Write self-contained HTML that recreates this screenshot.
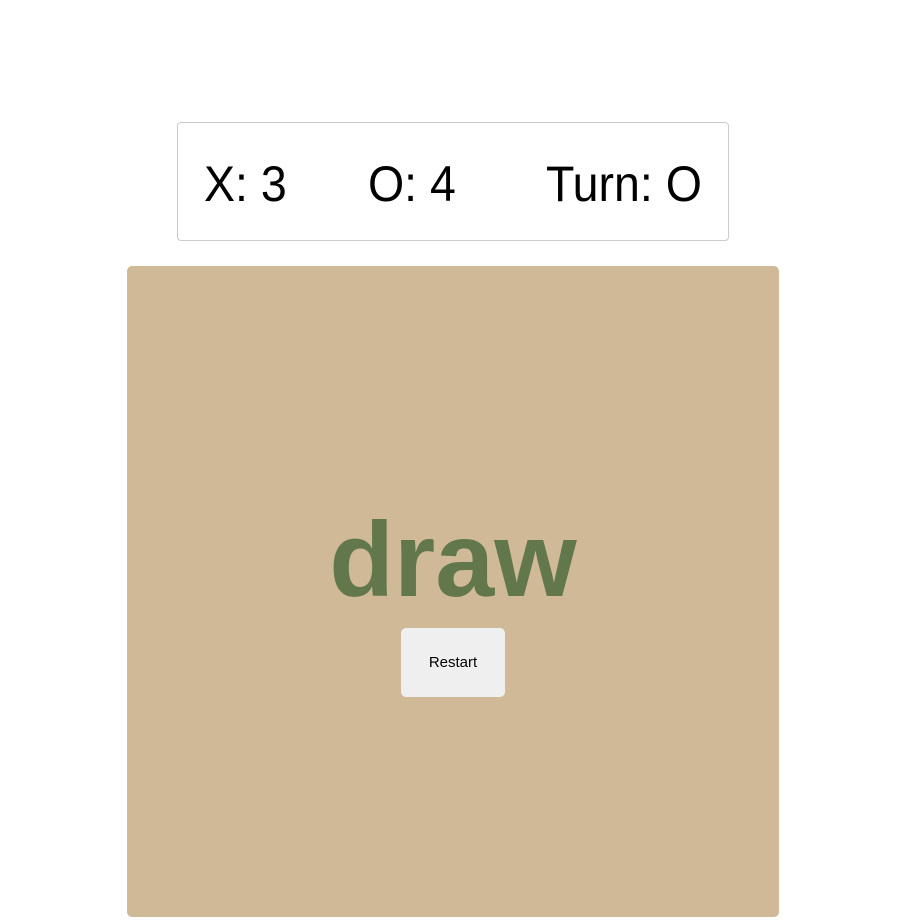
<!DOCTYPE html>
<html><head><style>
body{margin:0;width:902px;height:921px;background:#fff;position:relative;overflow:hidden;font-family:"Liberation Sans",sans-serif}
.score{position:absolute;left:177px;top:122px;width:550px;height:117px;border:1px solid #ccc;border-radius:4px;box-sizing:content-box}
.s{position:absolute;top:36px;font-size:50px;line-height:50px;color:#000;white-space:nowrap;transform:scaleX(0.93);transform-origin:left center}
.board{position:absolute;left:127px;top:266px;width:652px;height:651px;background:#d0b996;border-radius:5px}
.draw{position:absolute;left:0;width:652px;text-align:center;top:241px;font-size:106px;line-height:106px;font-weight:bold;color:#62774c}
.btn{position:absolute;left:274px;top:362px;width:104px;height:69px;background:#efefef;border-radius:5px;font-size:15px;text-align:center;line-height:69px;color:#000}
</style></head><body>
<div class="score">
<div class="s" style="left:26px">X: 3</div>
<div class="s" style="left:190px">O: 4</div>
<div class="s" style="left:368px">Turn: O</div>
</div>
<div class="board">
<div class="draw">draw</div>
<div class="btn">Restart</div>
</div>
</body></html>
